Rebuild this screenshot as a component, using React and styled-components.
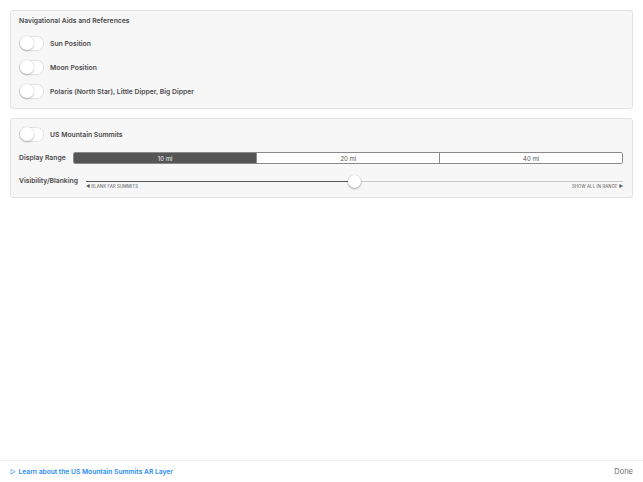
import { useState } from "react";
import styled, { createGlobalStyle } from "styled-components";

const GlobalStyle = createGlobalStyle`
  html, body {
    margin: 0;
    padding: 0;
    background: #ffffff;
  }
  body {
    font-family: "Inter", "Open Sans", "Liberation Sans", sans-serif;
    -webkit-font-smoothing: antialiased;
  }
  #root {
    height: 100vh;
  }
`;

const ranges = ["10 mi", "20 mi", "40 mi"];

const navItems = [
  { id: "sun", label: "Sun Position" },
  { id: "moon", label: "Moon Position" },
  { id: "polaris", label: "Polaris (North Star), Little Dipper, Big Dipper" },
];

const Toggle = ({ on, onClick }) => (
  <ToggleTrack on={on} onClick={onClick}>
    <ToggleKnob on={on} />
  </ToggleTrack>
);

export default function App() {
  const [toggles, setToggles] = useState({});
  const [range, setRange] = useState(0);
  const [blanking] = useState(0.5);

  const flip = (id) => setToggles((prev) => ({ ...prev, [id]: !prev[id] }));

  return (
    <>
      <GlobalStyle />
      <Page>
        <Content>
          <Panel>
            <PanelTitle>Navigational Aids and References</PanelTitle>
            {navItems.map((item) => (
              <ToggleRow key={item.id}>
                <Toggle on={toggles[item.id]} onClick={() => flip(item.id)} />
                <RowLabel>{item.label}</RowLabel>
              </ToggleRow>
            ))}
          </Panel>

          <Panel compact>
            <ToggleRow>
              <Toggle on={toggles.summits} onClick={() => flip("summits")} />
              <RowLabel>US Mountain Summits</RowLabel>
            </ToggleRow>
            <SettingRow>
              <SettingLabel>Display Range</SettingLabel>
              <Segmented>
                {ranges.map((r, i) => (
                  <Segment key={r} active={i === range} onClick={() => setRange(i)}>
                    {r}
                  </Segment>
                ))}
              </Segmented>
            </SettingRow>
            <SliderRow>
              <SettingLabel>Visibility/Blanking</SettingLabel>
              <Slider>
                <TrackArea>
                  <TrackFill style={{ width: `${blanking * 100}%` }} />
                  <TrackRest />
                  <Thumb style={{ left: `${blanking * 100}%` }} />
                </TrackArea>
                <SliderLabels>
                  <span>◀ BLANK FAR SUMMITS</span>
                  <span>SHOW ALL IN RANGE ▶</span>
                </SliderLabels>
              </Slider>
            </SliderRow>
          </Panel>
        </Content>

        <Footer>
          <LearnLink href="#">
            <LinkArrow>▷</LinkArrow>
            Learn about the US Mountain Summits AR Layer
          </LearnLink>
          <DoneButton>Done</DoneButton>
        </Footer>
      </Page>
    </>
  );
}

const Page = styled.div`
  height: 100%;
  display: flex;
  flex-direction: column;
`;

const Content = styled.div`
  flex: 1;
  display: flex;
  flex-direction: column;
  gap: 9px;
  padding: 10px 10px 0;
`;

const Panel = styled.section`
  background: #f7f7f7;
  border: 1px solid #e3e3e3;
  border-radius: 3px;
  padding: ${(p) => (p.compact ? "3px 9px 8px 8px" : "5px 9px 5px 8px")};
  display: flex;
  flex-direction: column;
`;

const PanelTitle = styled.h3`
  margin: 0 0 5px;
  height: 10px;
  line-height: 10px;
  font-size: 6.8px;
  font-weight: 600;
  color: #4a4a4a;
`;

const ToggleRow = styled.div`
  height: 24px;
  display: flex;
  align-items: center;
  gap: 6px;
`;

const ToggleTrack = styled.div`
  position: relative;
  width: 23px;
  height: 13px;
  border-radius: 7px;
  background: ${(p) => (p.on ? "#4cd964" : "#ffffff")};
  border: 1px solid #e2e2e2;
  cursor: pointer;
`;

const ToggleKnob = styled.div`
  position: absolute;
  top: -0.5px;
  left: ${(p) => (p.on ? "10px" : "-0.5px")};
  width: 14px;
  height: 14px;
  border-radius: 50%;
  background: #ffffff;
  box-shadow: 0 1px 2px rgba(0, 0, 0, 0.25), 0 0 0 0.5px rgba(0, 0, 0, 0.06);
`;

const RowLabel = styled.span`
  font-size: 6.8px;
  font-weight: 600;
  color: #4a4a4a;
`;

const SettingRow = styled.div`
  margin-top: 6px;
  display: flex;
  align-items: center;
  gap: 7px;
`;

const SliderRow = styled.div`
  margin-top: 13px;
  display: flex;
  align-items: flex-start;
  gap: 8px;
`;

const SettingLabel = styled.span`
  font-size: 6.8px;
  font-weight: 600;
  color: #4a4a4a;
  line-height: 8px;
  white-space: nowrap;
`;

const Segmented = styled.div`
  flex: 1;
  display: grid;
  grid-template-columns: repeat(3, 1fr);
  height: 12px;
  border: 1px solid #8a8a8a;
  border-radius: 2px;
  overflow: hidden;
  box-sizing: border-box;
`;

const Segment = styled.div`
  display: flex;
  align-items: center;
  justify-content: center;
  font-size: 6px;
  color: ${(p) => (p.active ? "#f0f0f0" : "#555555")};
  background: ${(p) => (p.active ? "#555555" : "#ffffff")};
  cursor: pointer;

  & + & {
    border-left: 1px solid #8a8a8a;
  }
`;

const Slider = styled.div`
  flex: 1;
  display: flex;
  flex-direction: column;
`;

const TrackArea = styled.div`
  position: relative;
  height: 8px;
  display: flex;
  align-items: center;
`;

const TrackFill = styled.div`
  height: 1px;
  background: #555555;
`;

const TrackRest = styled.div`
  flex: 1;
  height: 1px;
  background: #c8c8c8;
`;

const Thumb = styled.div`
  position: absolute;
  top: 50%;
  width: 13px;
  height: 13px;
  margin: -6.5px 0 0 -6.5px;
  border-radius: 50%;
  background: #ffffff;
  box-shadow: 0 1px 2px rgba(0, 0, 0, 0.3), 0 0 0 0.5px rgba(0, 0, 0, 0.08);
`;

const SliderLabels = styled.div`
  margin-top: -1px;
  display: flex;
  justify-content: space-between;
  font-size: 4.3px;
  line-height: 5px;
  letter-spacing: 0.1px;
  color: #555555;
`;

const Footer = styled.footer`
  height: 21px;
  border-top: 1px solid #ececec;
  display: flex;
  align-items: center;
  justify-content: space-between;
  padding: 0 10px;
`;

const LearnLink = styled.a`
  display: flex;
  align-items: center;
  gap: 3px;
  font-size: 6.7px;
  font-weight: 600;
  color: #2a8cf2;
  text-decoration: none;
`;

const LinkArrow = styled.span`
  font-size: 6px;
  font-weight: 400;
`;

const DoneButton = styled.button`
  border: 0;
  background: none;
  padding: 0;
  font-family: inherit;
  font-size: 7.5px;
  color: #6f6f6f;
  cursor: pointer;
`;
